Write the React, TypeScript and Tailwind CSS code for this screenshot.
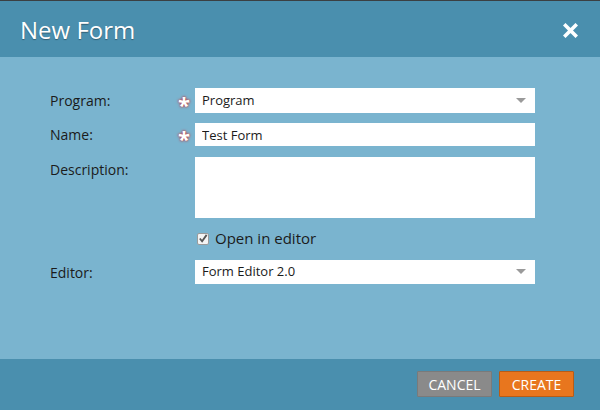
import { useState } from 'react'

const font = { fontFamily: '"Open Sans", "Liberation Sans", sans-serif' }

function Caret() {
  return (
    <svg width="10" height="6" viewBox="0 0 10 6" className="absolute right-[9px] top-1/2 -translate-y-1/2">
      <path d="M0 0 H10 L5 5 Z" fill="#9a9a9a" />
    </svg>
  )
}

function Required() {
  return (
    <span className="w-[17px] text-[22px] leading-none text-white font-bold pt-[7px] [text-shadow:0_0_2px_#c2404a,0_0_3px_#c2404a]">
      *
    </span>
  )
}

export default function App() {
  const [openInEditor, setOpenInEditor] = useState(true)

  return (
    <div className="w-[600px] h-[410px] flex flex-col bg-[#7ab4cf] overflow-hidden" style={font}>
      {/* Header */}
      <div className="h-[57px] shrink-0 bg-[#4a8fae] border-t border-[#3b3f42] flex items-center justify-between pl-[20px] pr-[22px] pt-[2px]">
        <h1 className="text-[24px] text-white [text-shadow:0_1px_1px_rgba(0,0,0,0.35)]">New Form</h1>
        <svg width="15" height="15" viewBox="0 0 15 15">
          <path d="M2.5 2.5 L12.5 12.5 M12.5 2.5 L2.5 12.5" stroke="white" strokeWidth="3.6" strokeLinecap="square" />
        </svg>
      </div>

      {/* Body */}
      <div className="flex-1 pl-[50px] pt-[31px] text-[14px] text-[#1b1b1b]">
        <div className="flex items-center h-[25px]">
          <label className="w-[128px]">Program:</label>
          <Required />
          <div className="relative w-[340px] h-[25px] bg-white flex items-center px-[7px] text-[13px]">
            Program
            <Caret />
          </div>
        </div>

        <div className="flex items-center h-[23px] mt-[10px]">
          <label className="w-[128px]">Name:</label>
          <Required />
          <input
            defaultValue="Test Form"
            className="w-[340px] h-[23px] bg-white px-[7px] text-[13px] outline-none"
          />
        </div>

        <div className="flex mt-[11px]">
          <label className="w-[145px] pt-[2px]">Description:</label>
          <textarea className="w-[340px] h-[61px] bg-white resize-none outline-none" />
        </div>

        <label
          className="flex items-center ml-[147px] mt-[12px] h-[17px] gap-[6px] text-[15px] cursor-pointer"
          onClick={() => setOpenInEditor(!openInEditor)}
        >
          <span className="w-[12px] h-[12px] bg-[#f4f4f4] border border-[#9a9a9a] rounded-[2px] flex items-center justify-center">
            {openInEditor && (
              <svg width="11" height="11" viewBox="0 0 11 11">
                <path d="M2 5.5 L4.5 8.5 L9.5 1.5" stroke="#555" strokeWidth="2" fill="none" />
              </svg>
            )}
          </span>
          Open in editor
        </label>

        <div className="flex items-center h-[24px] mt-[13px]">
          <label className="w-[145px]">Editor:</label>
          <div className="relative w-[340px] h-[24px] bg-white flex items-center px-[7px] text-[13px]">
            Form Editor 2.0
            <Caret />
          </div>
        </div>
      </div>

      {/* Footer */}
      <div className="h-[51px] shrink-0 bg-[#4a8fae] flex items-center justify-end gap-[7px] pr-[26px] pb-[1px]">
        <button className="w-[75px] h-[26px] bg-[#8a8a8a] border border-[#7a7a7a] text-white text-[14px] rounded-[1px]">
          CANCEL
        </button>
        <button className="w-[75px] h-[26px] bg-[#e8761e] border border-[#b85c16] text-white text-[14px] rounded-[1px]">
          CREATE
        </button>
      </div>
    </div>
  )
}
